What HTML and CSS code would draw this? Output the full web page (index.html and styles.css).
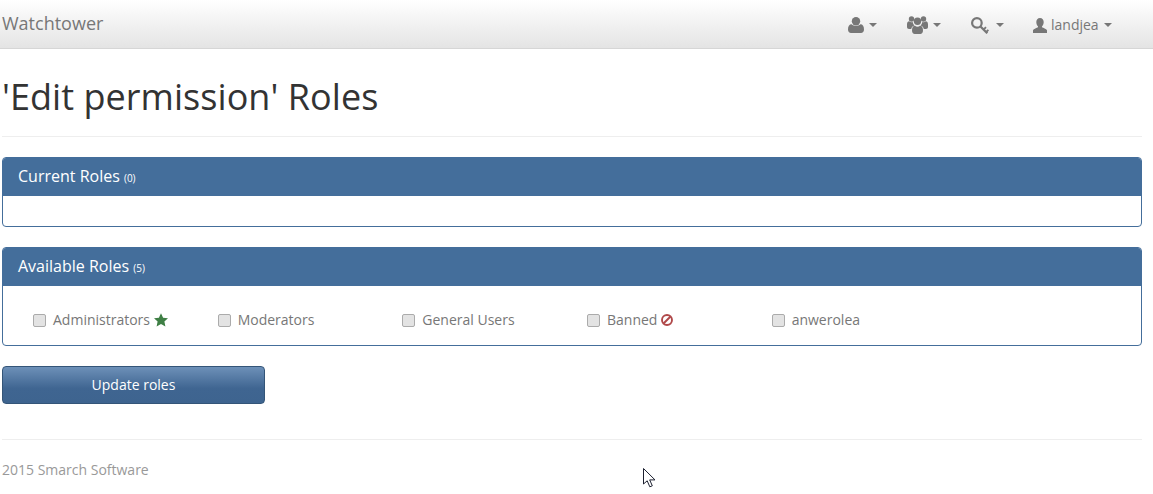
FILE: index.html
```html
<!DOCTYPE html>
<html lang="en">
<head>
<meta charset="utf-8">
<title>Watchtower</title>
<link rel="stylesheet" href="styles.css">
</head>
<body>
<nav class="navbar">
  <a class="brand">Watchtower</a>
  <ul class="nav">
    <li class="nav-item item-a">
      <svg class="ic" width="16" height="16" viewBox="0 0 16 16"><circle cx="8" cy="4.300" r="4.200" fill="#777"/><path d="M0 12.500c0-3.300 1.200-5.300 3.600-5.300 1.100 1 2.700 1.700 4.400 1.700s3.300-.7 4.400-1.700c2.400 0 3.600 2 3.600 5.300 0 2-1.300 3.500-3 3.500H3c-1.700 0-3-1.500-3-3.500z" fill="#777"/></svg>
      <span class="caret"></span>
    </li>
    <li class="nav-item item-b">
      <svg class="ic ic-group" width="21" height="18" viewBox="0 0 21 18"><g fill="#777"><circle cx="4.500" cy="3" r="2.700"/><circle cx="16.500" cy="3" r="2.700"/><circle cx="10.500" cy="5.300" r="3.700"/><path d="M0 8.500C0 6.500 1 5.300 2.200 5.300c.7.700 1.500 1 2.400 1 .4 0 .8 0 1.200-.2.100 1.400.7 2.700 1.700 3.500-1.800.4-3 1.600-3.300 3.400H2c-1.200 0-2-.8-2-2z"/><path d="M21 8.500c0-2-1-3.200-2.200-3.200-.7.700-1.500 1-2.400 1-.4 0-.8 0-1.200-.2-.1 1.400-.7 2.700-1.700 3.500 1.800.4 3 1.600 3.300 3.400H19c1.200 0 2-.8 2-2z"/><path d="M5 14.500c0-3 1.100-4.800 3-4.800.7.700 1.500 1 2.500 1s1.800-.3 2.500-1c1.900 0 3 1.800 3 4.800 0 2.100-1.200 3.500-2.700 3.500H7.700C6.200 18 5 16.600 5 14.500z"/></g></svg>
      <span class="caret"></span>
    </li>
    <li class="nav-item item-c">
      <svg class="ic ic-key" width="18" height="17" viewBox="0 0 18 17"><g fill="none" stroke="#777"><circle cx="5.900" cy="5.900" r="4.800" stroke-width="2.200"/><path d="M9.500 9.500l6.800 6.800" stroke-width="2.200"/><path d="M12.700 12.500l2.300-2.300M15.200 15l2.200-2.200" stroke-width="1.800"/></g></svg>
      <span class="caret"></span>
    </li>
    <li class="nav-item item-d">
      <svg class="ic ic-user" width="14" height="15" viewBox="0 0 14 15"><path d="M7 0c2.300 0 3.700 1.700 3.700 4 0 1.700-.7 3.300-1.600 4.200-.3.500-.2 1.100.4 1.400 1.700.8 3.600 1.500 4.500 2.600V15H0v-2.800c.9-1.100 2.800-1.800 4.500-2.600.6-.3.700-.9.400-1.400C4 7.300 3.300 5.700 3.300 4 3.300 1.700 4.700 0 7 0z" fill="#777"/></svg>
      <span class="nav-label">landjea</span>
      <span class="caret"></span>
    </li>
  </ul>
</nav>
<main class="container">
  <header class="page-header"><h1>'Edit permission' Roles</h1></header>
  <section class="panel">
    <div class="panel-heading">Current Roles <small>(0)</small></div>
    <div class="panel-body empty"></div>
  </section>
  <section class="panel">
    <div class="panel-heading">Available Roles <small>(5)</small></div>
    <div class="panel-body roles">
      <label class="role"><input type="checkbox"><span>Administrators</span><svg class="role-ic" width="14" height="14" viewBox="0 0 14 14"><path d="M7 .2l2.100 4.500 4.900.5-3.600 3.300 1 4.900L7 11l-4.400 2.400 1-4.900L0 5.200l4.900-.5z" fill="#3f7f45"/></svg></label>
      <label class="role"><input type="checkbox"><span>Moderators</span></label>
      <label class="role"><input type="checkbox"><span>General Users</span></label>
      <label class="role"><input type="checkbox"><span>Banned</span><svg class="role-ic" width="12" height="12" viewBox="0 0 12 12"><g fill="none" stroke="#b0494a" stroke-width="1.900"><circle cx="6" cy="6" r="5"/><path d="M2.500 9.500l7-7"/></g></svg></label>
      <label class="role"><input type="checkbox"><span>anwerolea</span></label>
    </div>
  </section>
  <button class="btn" type="button">Update roles</button>
  <footer class="footer">2015 Smarch Software</footer>
</main>
<svg class="cursor" width="14" height="20" viewBox="0 0 14 20"><path d="M.5.500v15.500l3.700-3.200 2.600 6 2.500-1-2.600-5.900H12z" fill="#fff" stroke="#1c2030" stroke-width="1"/></svg>
</body>
</html>
```
FILE: styles.css
```css
* { box-sizing: border-box; }
html, body { margin: 0; padding: 0; }
body {
  position: relative;
  height: 494px;
  overflow: hidden;
  background: #fff;
  color: #777;
  font-family: "Open Sans", sans-serif;
  font-size: 14px;
  line-height: 20px;
}
.navbar {
  display: flex;
  justify-content: space-between;
  height: 49px;
  background: linear-gradient(to bottom, #fff 0, #e4e4e4 100%);
  border-bottom: 1px solid #d6d6d6;
}
.brand {
  padding: 13px 0 0 2px;
  font-size: 18px;
  color: #777;
}
.nav {
  display: flex;
  list-style: none;
  margin: 0;
  padding: 0;
  align-items: flex-start;
}
.nav-item {
  display: flex;
  align-items: center;
  height: 50px;
}
.item-a { width: 59px; }
.item-b { width: 64px; }
.item-c { width: 62px; }
.item-d { width: 120px; }
.ic { display: block; flex: none; margin-right: 5px; }
.ic-key { margin-right: 7px; }
.item-d .ic { margin-right: 4px; }
.nav-label { margin-right: 5px; }
.caret {
  width: 0;
  height: 0;
  border-top: 4px solid #777;
  border-left: 4px solid transparent;
  border-right: 4px solid transparent;
}
.container { width: 1140px; margin-left: 2px; }
.page-header {
  height: 88px;
  padding-top: 23px;
  border-bottom: 1px solid #eee;
  margin-bottom: 20px;
}
h1 {
  margin: 0;
  font-size: 36px;
  font-weight: 400;
  line-height: 50px;
  letter-spacing: .05px;
  color: #333;
}
.panel {
  border: 1px solid #446e9b;
  border-radius: 4px;
  margin-bottom: 20px;
  overflow: hidden;
}
.panel-heading {
  height: 38px;
  padding: 8px 15px 0;
  background: #446e9b;
  color: #fff;
  font-size: 16px;
  line-height: 20px;
}
.panel-heading small { font-size: 10px; }
.empty { height: 30px; }
.roles {
  display: grid;
  grid-template-columns: repeat(6, 184.67px);
  height: 59px;
  padding: 24px 15px 0;
}
.role {
  display: flex;
  align-items: center;
  height: 20px;
  padding-left: 15px;
  color: #777;
}
.role input {
  appearance: none;
  width: 13px;
  height: 13px;
  margin: 0 7px 0 0;
  background: #e3e3e3;
  border: 1px solid #ababab;
  border-radius: 2px;
}
.role-ic { margin-left: 4px; flex: none; }
.btn {
  display: block;
  width: 263px;
  height: 38px;
  padding: 0;
  border: 1px solid #345578;
  border-radius: 4px;
  background: linear-gradient(to bottom, #6d90b8 0, #3f6591 60%, #3e648f 100%);
  color: #fff;
  font: 14px/20px "Open Sans", sans-serif;
}
.footer {
  margin-top: 35px;
  height: 55px;
  padding-top: 20px;
  border-top: 1px solid #eee;
  color: #999;
}
.cursor { position: absolute; left: 643px; top: 468px; }
```
